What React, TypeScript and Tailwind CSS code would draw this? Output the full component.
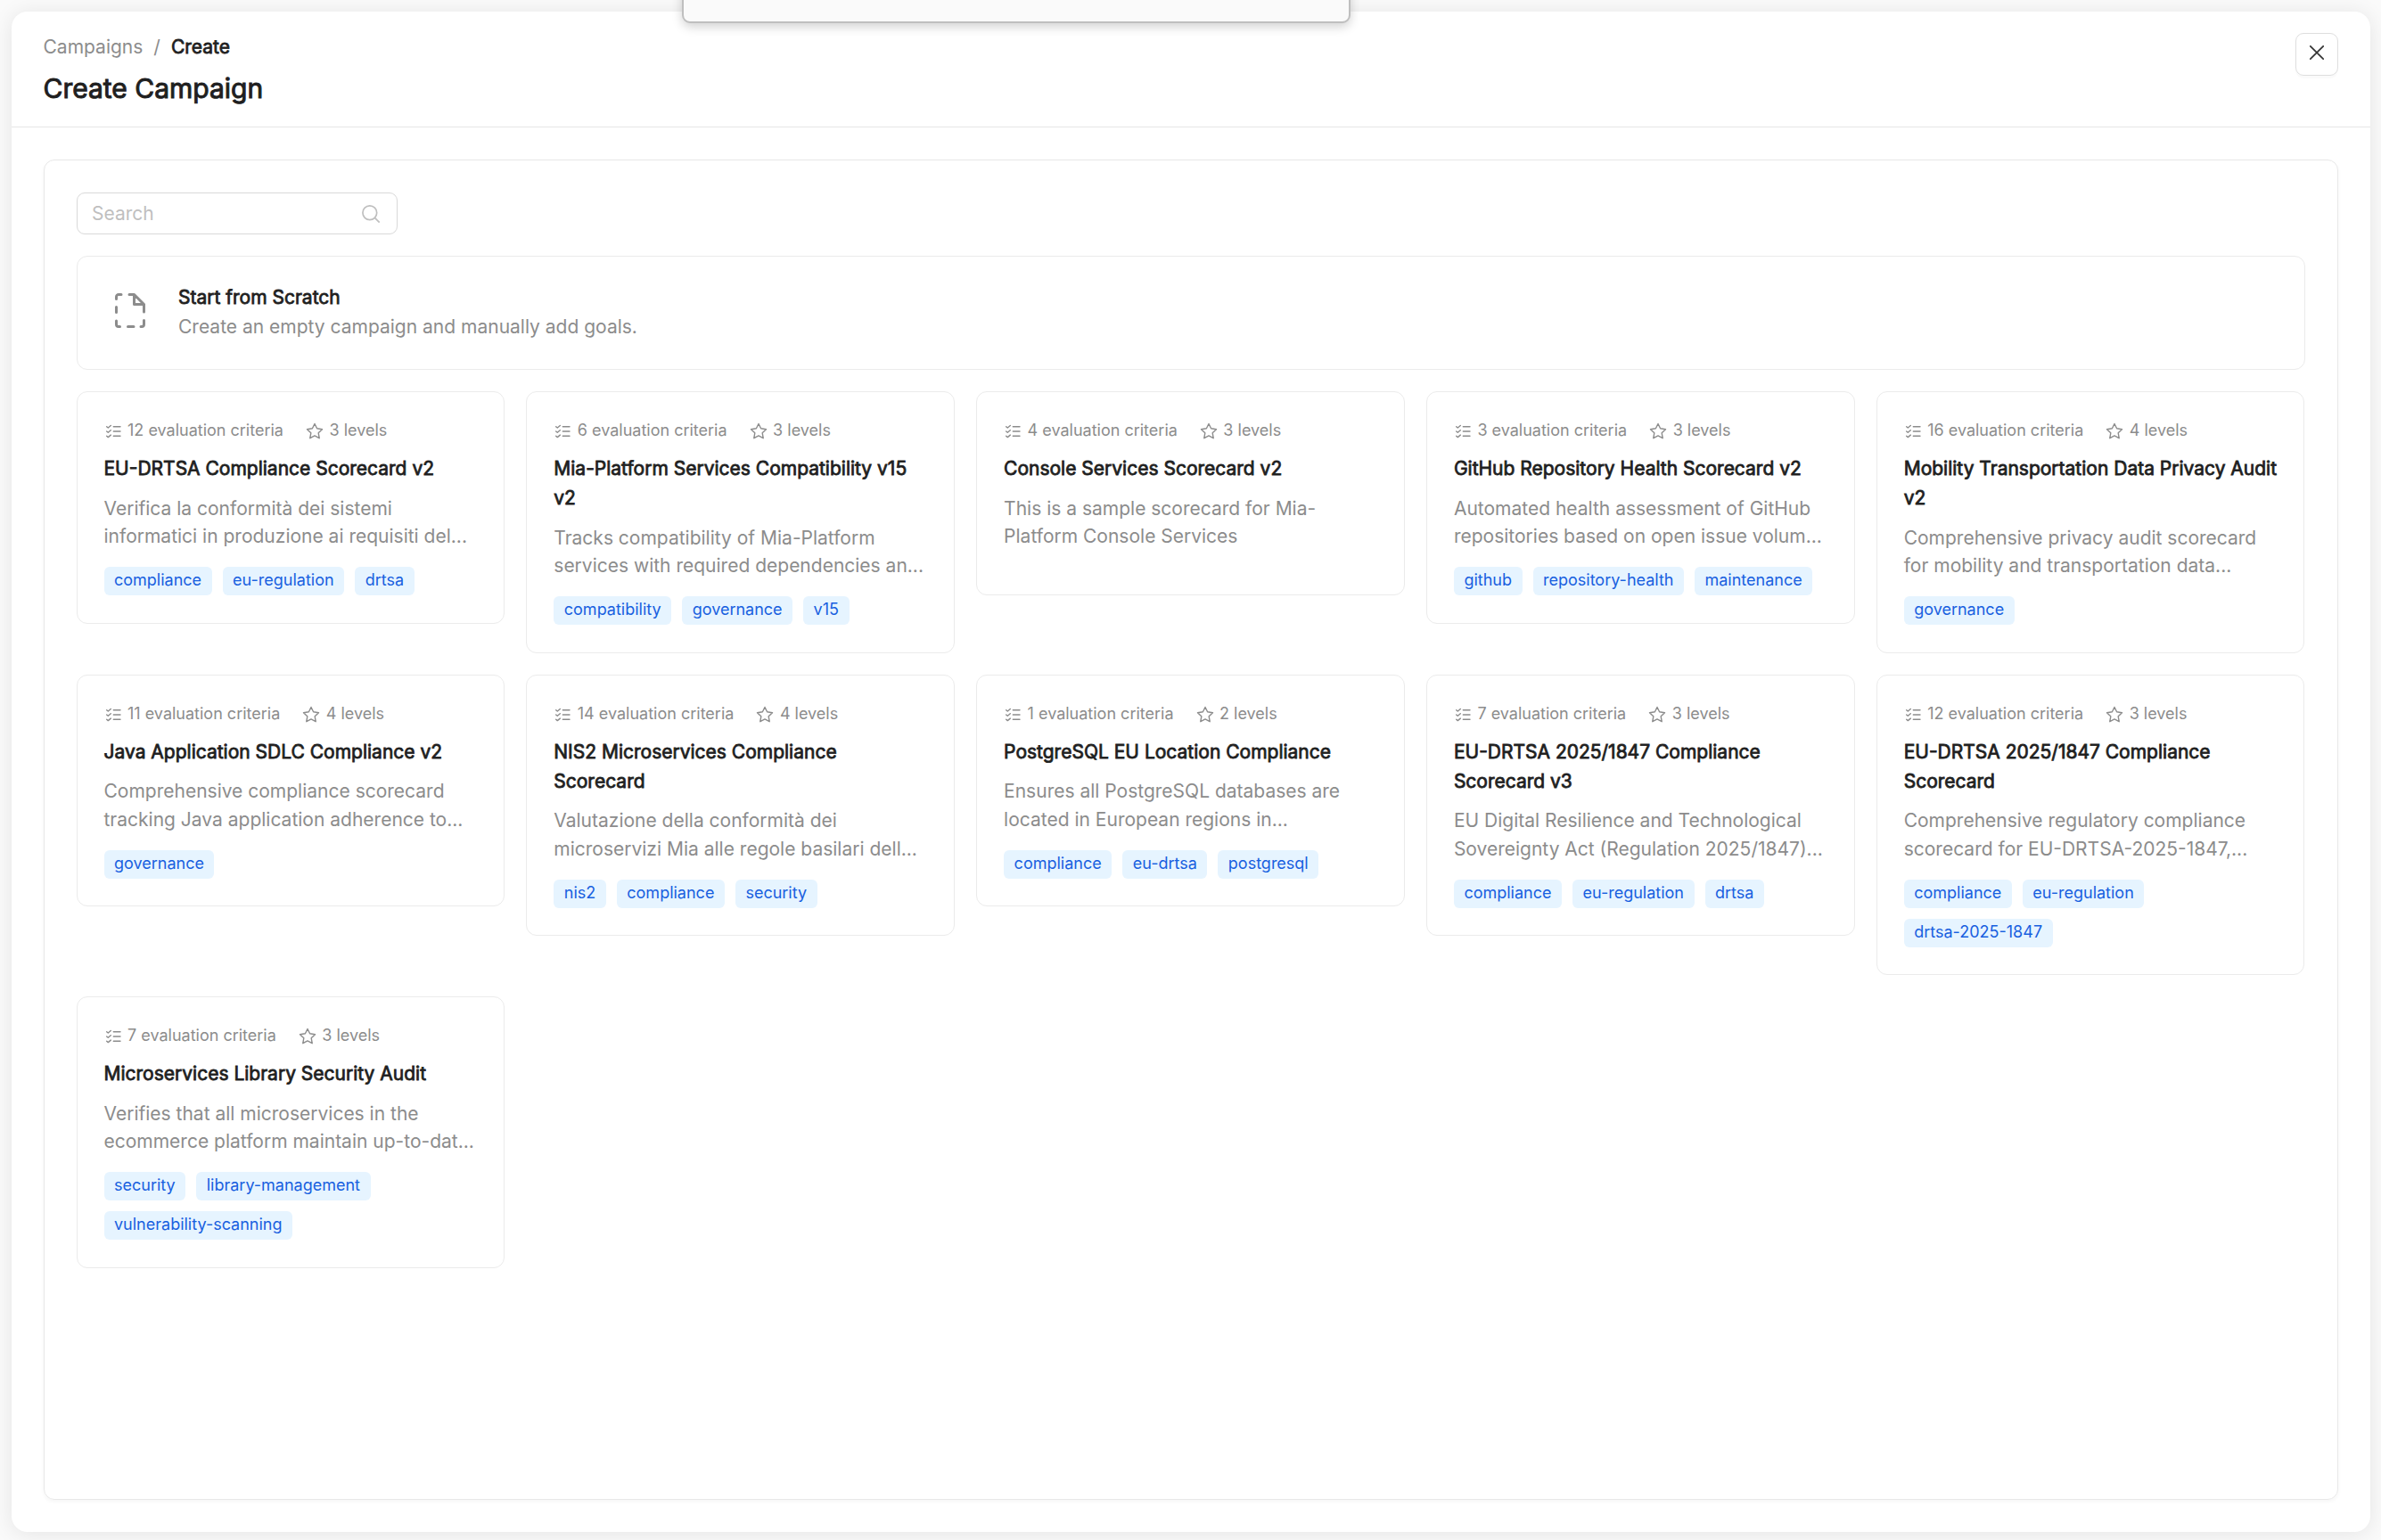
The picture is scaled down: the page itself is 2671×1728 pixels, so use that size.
interface Template {
  criteria: number;
  levels: number;
  title: string;
  description: string;
  tags: string[];
}

const TEMPLATES: Template[] = [
  {
    criteria: 12,
    levels: 3,
    title: "EU-DRTSA Compliance Scorecard v2",
    description: "Verifica la conformità dei sistemi\ninformatici in produzione ai requisiti del...",
    tags: ["compliance", "eu-regulation", "drtsa"],
  },
  {
    criteria: 6,
    levels: 3,
    title: "Mia-Platform Services Compatibility v15\nv2",
    description: "Tracks compatibility of Mia-Platform\nservices with required dependencies an...",
    tags: ["compatibility", "governance", "v15"],
  },
  {
    criteria: 4,
    levels: 3,
    title: "Console Services Scorecard v2",
    description: "This is a sample scorecard for Mia-\nPlatform Console Services",
    tags: [],
  },
  {
    criteria: 3,
    levels: 3,
    title: "GitHub Repository Health Scorecard v2",
    description: "Automated health assessment of GitHub\nrepositories based on open issue volum...",
    tags: ["github", "repository-health", "maintenance"],
  },
  {
    criteria: 16,
    levels: 4,
    title: "Mobility Transportation Data Privacy Audit\nv2",
    description: "Comprehensive privacy audit scorecard\nfor mobility and transportation data...",
    tags: ["governance"],
  },
  {
    criteria: 11,
    levels: 4,
    title: "Java Application SDLC Compliance v2",
    description: "Comprehensive compliance scorecard\ntracking Java application adherence to...",
    tags: ["governance"],
  },
  {
    criteria: 14,
    levels: 4,
    title: "NIS2 Microservices Compliance\nScorecard",
    description: "Valutazione della conformità dei\nmicroservizi Mia alle regole basilari dell...",
    tags: ["nis2", "compliance", "security"],
  },
  {
    criteria: 1,
    levels: 2,
    title: "PostgreSQL EU Location Compliance",
    description: "Ensures all PostgreSQL databases are\nlocated in European regions in...",
    tags: ["compliance", "eu-drtsa", "postgresql"],
  },
  {
    criteria: 7,
    levels: 3,
    title: "EU-DRTSA 2025/1847 Compliance\nScorecard v3",
    description: "EU Digital Resilience and Technological\nSovereignty Act (Regulation 2025/1847)...",
    tags: ["compliance", "eu-regulation", "drtsa"],
  },
  {
    criteria: 12,
    levels: 3,
    title: "EU-DRTSA 2025/1847 Compliance\nScorecard",
    description: "Comprehensive regulatory compliance\nscorecard for EU-DRTSA-2025-1847,...",
    tags: ["compliance", "eu-regulation", "drtsa-2025-1847"],
  },
  {
    criteria: 7,
    levels: 3,
    title: "Microservices Library Security Audit",
    description: "Verifies that all microservices in the\necommerce platform maintain up-to-dat...",
    tags: ["security", "library-management", "vulnerability-scanning"],
  },
];

function DashedFileIcon() {
  return (
    <svg
      viewBox="0 0 34 39"
      className="-mt-1.5 h-[39px] w-[34px] shrink-0 text-[#8c8c8c]"
      fill="none"
      stroke="currentColor"
      strokeWidth="3"
      strokeLinecap="round"
      strokeLinejoin="round"
    >
      <path d="M1.5 6.5V4A2.5 2.5 0 0 1 4 1.5H7M1.5 15.5v6M1.5 31v4A2.5 2.5 0 0 0 4 37.5H5.5M14.5 37.5H21M29 37.5h1a2.5 2.5 0 0 0 2.5-2.5v-4.5M32.5 21v-8.500L21.500 1.500H16M21.500 1.500v11h11" />
    </svg>
  );
}

function ChecklistIcon() {
  return (
    <svg
      viewBox="0 0 17 16"
      className="mt-[3px] mr-[7.5px] ml-0.5 h-4 w-[17px]"
      fill="none"
      stroke="currentColor"
      strokeWidth="1.4"
      strokeLinecap="round"
      strokeLinejoin="round"
    >
      <path d="M.7 2.700l1.600 1.300L5.300 1.500M.7 8l1.600 1.300L5.300 6.800M.7 13.300l1.600 1.300L5.300 12.100M8.300 2.700h7.700M8.300 8h7.700M8.300 13.300h7.700" />
    </svg>
  );
}

function StarIcon() {
  return (
    <svg
      viewBox="0 0 20 20"
      className="mt-[3px] mr-[6.5px] ml-[25px] size-5"
      fill="none"
      stroke="currentColor"
      strokeWidth="1.4"
      strokeLinejoin="round"
    >
      <path d="M10 1.500l2.600 5.300 5.900.9-4.300 4.100 1 5.900L10 14.900l-5.200 2.800 1-5.900L1.500 7.700l5.900-.9z" />
    </svg>
  );
}

function SearchIcon() {
  return (
    <svg viewBox="0 0 24 24" className="size-6" fill="none" stroke="currentColor" strokeWidth="1.7">
      <circle cx="10.800" cy="10.800" r="7.900" />
      <path d="M16.400 16.400l5.300 5.300" />
    </svg>
  );
}

function TemplateCard({ template }: { template: Template }) {
  return (
    <article className="rounded-xl border border-[#ebebeb] bg-white px-[30px] pt-[30px] pb-[30.5px]">
      <div className="flex h-[25px] items-center text-[18px] leading-[25px] text-[#8c8c8c]">
        <ChecklistIcon />
        <span>{template.criteria} evaluation criteria</span>
        <StarIcon />
        <span>{template.levels} levels</span>
      </div>
      <h2 className="mt-[14px] text-[21px] leading-[33px] whitespace-pre text-[#1f1f1f] [-webkit-text-stroke:0.8px]">
        {template.title}
      </h2>
      <p className="mt-[12.5px] text-[21px] leading-[31.5px] whitespace-pre text-[#8c8c8c]">{template.description}</p>
      <div className="mt-[18.5px] flex flex-wrap gap-3">
        {template.tags.map((tag) => (
          <span
            key={tag}
            className="h-8 rounded-md bg-[#e6f4ff] px-[11.5px] text-[18px] leading-[30px] whitespace-nowrap text-[#1860e0]"
          >
            {tag}
          </span>
        ))}
      </div>
    </article>
  );
}

export default function App() {
  return (
    <div className="relative h-[1728px] w-[2671px] overflow-hidden bg-[#fafafa] pt-[13px] pr-[12.5px] pb-[9px] pl-[12.5px] font-['Inter',sans-serif]">
      <div className="flex h-full flex-col rounded-[18px] bg-white shadow-[0_2px_24px_rgba(0,0,0,0.09)]">
        <header className="flex h-[130px] shrink-0 items-start justify-between border-b border-[#e6e6e6] px-9">
          <div>
            <nav className="mt-[23px] flex text-[21px] leading-[33px] text-[#8c8c8c]">
              <span>Campaigns</span>
              <span className="mx-3">/</span>
              <span className="text-[#1f1f1f] [-webkit-text-stroke:0.8px]">Create</span>
            </nav>
            <h1 className="mt-[9px] text-[30px] leading-[42px] text-[#1f1f1f] [-webkit-text-stroke:1px]">
              Create Campaign
            </h1>
          </div>
          <button
            aria-label="Close"
            className="mt-6 flex size-12 items-center justify-center rounded-[9px] border border-[#dedede] shadow-[0_3px_0_rgba(0,0,0,0.02)]"
          >
            <svg viewBox="0 0 16 16" className="-mt-1 size-4" stroke="#333" strokeWidth="1.7" strokeLinecap="round">
              <path d="M.8.8l14.400 14.400M15.200.8L.8 15.200" />
            </svg>
          </button>
        </header>

        <main className="m-9 flex-1 rounded-xl border border-[#e8e8e8] px-9 pt-9 shadow-[0_2px_4px_rgba(0,0,0,0.04)]">
          <div className="flex h-[47px] w-[360px] items-center justify-between rounded-[9px] border border-[#d9d9d9] px-[16.5px] text-[21px] leading-[31px] text-[#bfbfbf]">
            <span>Search</span>
            <SearchIcon />
          </div>

          <section className="mt-6 flex h-32 items-center rounded-xl border border-[#ebebeb] pl-[42.5px]">
            <DashedFileIcon />
            <div className="-mt-0.5 ml-[37px] text-[21px] leading-[33px]">
              <h2 className="text-[#1f1f1f] [-webkit-text-stroke:0.8px]">Start from Scratch</h2>
              <p className="text-[#8c8c8c]">Create an empty campaign and manually add goals.</p>
            </div>
          </section>

          <section className="mt-6 grid grid-cols-5 items-start gap-6">
            {TEMPLATES.map((template) => (
              <TemplateCard key={template.title} template={template} />
            ))}
          </section>
        </main>
      </div>

      {/* Lower edge of the window that hangs over the page */}
      <div className="absolute -top-6 left-[765px] h-[50px] w-[750px] rounded-[9px] border-2 border-[#bfbfbf] bg-[#fafafa] shadow-[0_4px_12px_rgba(0,0,0,0.18)]" />
    </div>
  );
}
